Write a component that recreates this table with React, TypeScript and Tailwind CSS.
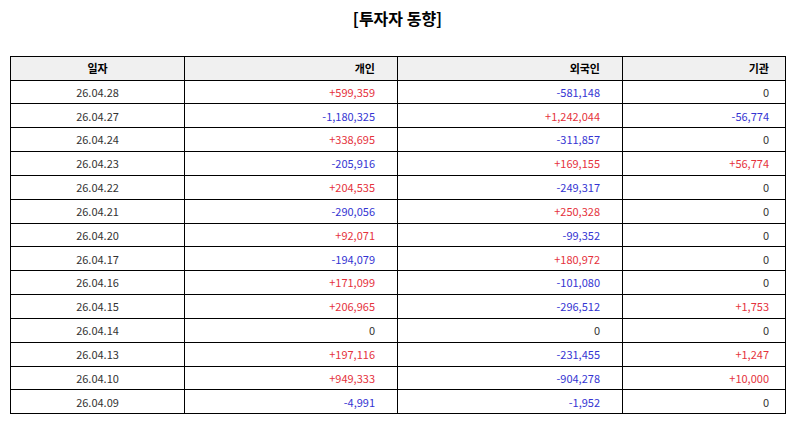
import React from "react";

type Row = [string, string, string, string];

const rows: Row[] = [
  ["26.04.28", "+599,359", "-581,148", "0"],
  ["26.04.27", "-1,180,325", "+1,242,044", "-56,774"],
  ["26.04.24", "+338,695", "-311,857", "0"],
  ["26.04.23", "-205,916", "+169,155", "+56,774"],
  ["26.04.22", "+204,535", "-249,317", "0"],
  ["26.04.21", "-290,056", "+250,328", "0"],
  ["26.04.20", "+92,071", "-99,352", "0"],
  ["26.04.17", "-194,079", "+180,972", "0"],
  ["26.04.16", "+171,099", "-101,080", "0"],
  ["26.04.15", "+206,965", "-296,512", "+1,753"],
  ["26.04.14", "0", "0", "0"],
  ["26.04.13", "+197,116", "-231,455", "+1,247"],
  ["26.04.10", "+949,333", "-904,278", "+10,000"],
  ["26.04.09", "-4,991", "-1,952", "0"],
];

function color(v: string) {
  if (v.startsWith("+")) return "text-[#e5323c]";
  if (v.startsWith("-")) return "text-[#3434d2]";
  return "text-[#333333]";
}

export default function App() {
  return (
    <div
      className="w-[795px] h-[424px] bg-white pt-[7px]"
      style={{ fontFamily: '"Noto Sans CJK KR", "Noto Sans", sans-serif' }}
    >
      <h1 className="text-center text-[16px] font-bold leading-[22px] text-black">[투자자 동향]</h1>
      <div className="px-[10px] pt-[27px]">
        <table className="w-[775px] border-collapse border border-black table-fixed text-[11px] text-[#333333]">
          <colgroup>
            <col className="w-[174px]" />
            <col className="w-[213px]" />
            <col className="w-[225px]" />
            <col className="w-[163px]" />
          </colgroup>
          <thead>
            <tr className="h-[23.5px] bg-[#f0f0f0] text-black font-bold">
              <th className="border border-black text-center font-bold p-0">일자</th>
              <th className="border border-black text-right font-bold p-0 pr-[22px]">개인</th>
              <th className="border border-black text-right font-bold p-0 pr-[22px]">외국인</th>
              <th className="border border-black text-right font-bold p-0 pr-[16px]">기관</th>
            </tr>
          </thead>
          <tbody>
            {rows.map((r) => (
              <tr key={r[0]} className="h-[23.85px]">
                <td className="border border-black text-center p-0">{r[0]}</td>
                <td className={`border border-black text-right p-0 pr-[22px] ${color(r[1])}`}>{r[1]}</td>
                <td className={`border border-black text-right p-0 pr-[22px] ${color(r[2])}`}>{r[2]}</td>
                <td className={`border border-black text-right p-0 pr-[16px] ${color(r[3])}`}>{r[3]}</td>
              </tr>
            ))}
          </tbody>
        </table>
      </div>
    </div>
  );
}
